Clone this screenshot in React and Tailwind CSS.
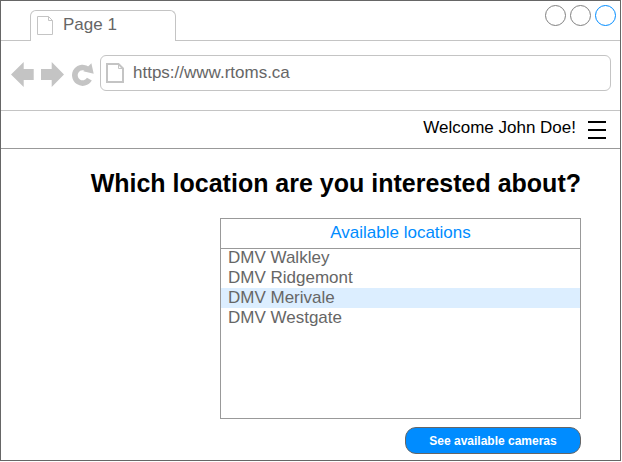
import { useState } from "react";

const locations = ["DMV Walkley", "DMV Ridgemont", "DMV Merivale", "DMV Westgate"];

function BackIcon() {
  return (
    <svg className="h-7 w-6" viewBox="0 0 24 28" fill="#c4c4c4" aria-hidden="true">
      <path d="M0 15.5 12.7 3v7H22.7v11H12.7v7Z" />
    </svg>
  );
}

function ForwardIcon() {
  return (
    <svg className="h-7 w-6" viewBox="0 0 24 28" fill="#c4c4c4" aria-hidden="true">
      <path d="M23 15.5 10.7 3v7H0v11h10.7v7Z" />
    </svg>
  );
}

function ReloadIcon() {
  return (
    <svg className="h-7 w-6" viewBox="0 0 24 28" aria-hidden="true">
      <path d="M16.8 10.4A7.8 7.8 0 1 0 18.4 20.2" fill="none" stroke="#c4c4c4" strokeWidth="5.6" />
      <path d="M20.4 4.3 22.7 14.8 12.3 12.2Z" fill="#c4c4c4" />
    </svg>
  );
}

function TabPageIcon() {
  return (
    <svg className="h-5 w-4 shrink-0" viewBox="0 0 16 20" fill="none" stroke="#c4c4c4" aria-hidden="true">
      <path d="M.5 1.5H11.5L15.5 5.5V19.5H.5Z" />
      <path d="M11.5 1.5V5.5H15.5" />
    </svg>
  );
}

function AddressPageIcon() {
  return (
    <svg className="h-5 w-[18px] shrink-0" viewBox="0 0 18 20" fill="none" stroke="#c4c4c4" strokeWidth="2" aria-hidden="true">
      <path d="M1 1H12.5L17 5.5V19H1Z" />
      <path d="M12.5 1.5V5.5H17" strokeWidth="1" />
    </svg>
  );
}

export default function App() {
  const [selected, setSelected] = useState("DMV Merivale");
  const [address, setAddress] = useState("https://www.rtoms.ca");

  return (
    <div className="pr-px pb-px font-['Liberation_Sans',Arial,sans-serif] text-[17px] leading-5">
      <div className="border border-[#666] bg-white">
        <div className="flex h-10">
          <div className="w-[29px] border-b border-[#c4c4c4]" />
          <button
            type="button"
            className="mt-[9px] flex w-[146px] items-start gap-[10px] rounded-t-md border border-b-0 border-[#c4c4c4] pt-1 pl-[6px] text-[#666]"
          >
            <TabPageIcon />
            Page 1
          </button>
          <div className="flex flex-1 items-start justify-end gap-1 border-b border-[#c4c4c4] pt-1 pr-1">
            <button type="button" aria-label="Minimize" className="size-[21px] rounded-full border border-[#808080]" />
            <button type="button" aria-label="Maximize" className="size-[21px] rounded-full border border-[#808080]" />
            <button type="button" aria-label="Close" className="size-[21px] rounded-full border border-[#008cff]" />
          </div>
        </div>

        <div className="flex items-center gap-[5px] border-b border-[#c4c4c4] pt-[14px] pr-[9px] pb-[19px] pl-[10px]">
          <div className="flex gap-1.5">
            <button type="button" aria-label="Back"><BackIcon /></button>
            <button type="button" aria-label="Forward"><ForwardIcon /></button>
            <button type="button" aria-label="Reload"><ReloadIcon /></button>
          </div>
          <label className="flex h-9 min-w-0 flex-1 items-center gap-[9px] rounded-md border border-[#c4c4c4] pl-[5px]">
            <AddressPageIcon />
            <input
              type="text"
              aria-label="Address"
              value={address}
              onChange={(e) => setAddress(e.target.value)}
              className="min-w-0 flex-1 text-[#666] outline-none"
            />
          </label>
        </div>

        <header className="flex h-[38px] items-center justify-end gap-3 border-b border-[#999] pr-[14px] text-black">
          <span className="pb-1">Welcome John Doe!</span>
          <button type="button" aria-label="Menu" className="flex flex-col gap-[6px]">
            <span className="h-0.5 w-[18px] bg-black" />
            <span className="h-0.5 w-[18px] bg-black" />
            <span className="h-0.5 w-[18px] bg-black" />
          </button>
        </header>

        <main className="flex flex-col items-end pt-[19px] pr-[39px] pb-[6px]">
          <h1 className="text-[25px] leading-[30px] font-bold text-black">
            Which location are you interested about?
          </h1>
          <section className="mt-5 w-[361px] max-w-full border border-[#999]">
            <h2 id="locations" className="h-[30px] border-b border-[#999] pt-1 text-center text-[#008cff]">
              Available locations
            </h2>
            <div role="radiogroup" aria-labelledby="locations" className="-mt-px min-h-[170px]">
              {locations.map((name) => (
                <label
                  key={name}
                  className="flex pl-[7px] text-[#666] has-checked:bg-[#dceeff]"
                >
                  <input
                    type="radio"
                    name="location"
                    checked={selected === name}
                    onChange={() => setSelected(name)}
                    className="w-0 appearance-none"
                  />
                  {name}
                </label>
              ))}
            </div>
          </section>
          <button
            type="button"
            className="mt-2 h-[27px] w-44 rounded-[11px] border border-[#666] bg-[#008cff] text-xs font-bold text-white"
          >
            See available cameras
          </button>
        </main>
      </div>
    </div>
  );
}
